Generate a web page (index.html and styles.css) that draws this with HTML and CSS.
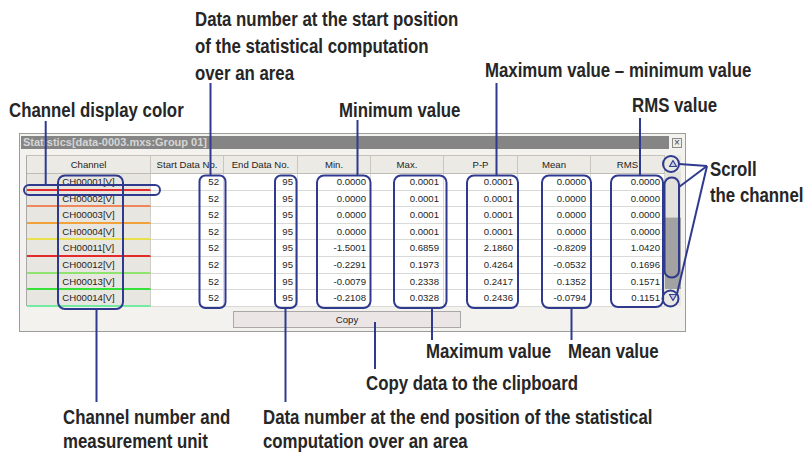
FILE: index.html
```html
<!DOCTYPE html>
<html>
<head>
<meta charset="utf-8">
<link rel="stylesheet" href="styles.css">
</head>
<body>
<div class="page">
  <div class="window">
    <div class="titlebar">
      <div class="title">Statistics[data-0003.mxs:Group 01]</div>
      <div class="close">×</div>
    </div>
    <div class="grid-wrap">
      <div class="table">
        <div class="hd">Channel</div><div class="hd">Start Data No.</div><div class="hd">End Data No.</div><div class="hd">Min.</div><div class="hd">Max.</div><div class="hd">P-P</div><div class="hd">Mean</div><div class="hd">RMS</div>

        <div class="ch c1">CH00001[V]</div><div class="td">52</div><div class="td">95</div><div class="td">0.0000</div><div class="td">0.0001</div><div class="td">0.0001</div><div class="td">0.0000</div><div class="td">0.0000</div>
        <div class="ch c2">CH00002[V]</div><div class="td">52</div><div class="td">95</div><div class="td">0.0000</div><div class="td">0.0001</div><div class="td">0.0001</div><div class="td">0.0000</div><div class="td">0.0000</div>
        <div class="ch c3">CH00003[V]</div><div class="td">52</div><div class="td">95</div><div class="td">0.0000</div><div class="td">0.0001</div><div class="td">0.0001</div><div class="td">0.0000</div><div class="td">0.0000</div>
        <div class="ch c4">CH00004[V]</div><div class="td">52</div><div class="td">95</div><div class="td">0.0000</div><div class="td">0.0001</div><div class="td">0.0001</div><div class="td">0.0000</div><div class="td">0.0000</div>
        <div class="ch c5">CH00011[V]</div><div class="td">52</div><div class="td">95</div><div class="td">-1.5001</div><div class="td">0.6859</div><div class="td">2.1860</div><div class="td">-0.8209</div><div class="td">1.0420</div>
        <div class="ch c6">CH00012[V]</div><div class="td">52</div><div class="td">95</div><div class="td">-0.2291</div><div class="td">0.1973</div><div class="td">0.4264</div><div class="td">-0.0532</div><div class="td">0.1696</div>
        <div class="ch c7">CH00013[V]</div><div class="td">52</div><div class="td">95</div><div class="td">-0.0079</div><div class="td">0.2338</div><div class="td">0.2417</div><div class="td">0.1352</div><div class="td">0.1571</div>
        <div class="ch c8">CH00014[V]</div><div class="td">52</div><div class="td">95</div><div class="td">-0.2108</div><div class="td">0.0328</div><div class="td">0.2436</div><div class="td">-0.0794</div><div class="td">0.1151</div>
      </div>
      <div class="scrollbar">
        <div class="sbtn">
          <svg width="10" height="9" viewBox="0 0 10 9"><path d="M5 1.5 L8.5 7.5 L1.5 7.5 Z" fill="#c6c9e8" stroke="#34408f" stroke-width="1.2" stroke-linejoin="round"/></svg>
        </div>
        <div class="track">
          <div class="thumb"></div>
        </div>
        <div class="sbtn">
          <svg width="10" height="9" viewBox="0 0 10 9"><path d="M1.5 1.5 L8.5 1.5 L5 7.5 Z" fill="#c6c9e8" stroke="#34408f" stroke-width="1.2" stroke-linejoin="round"/></svg>
        </div>
      </div>
    </div>
    <div class="copy-row">
      <div class="copy">Copy</div>
    </div>
  </div>

  <svg class="callouts" width="806" height="452" viewBox="0 0 806 452">
    <g fill="none" stroke="#2f3a8f" stroke-width="2">
      <line x1="45.7" y1="121" x2="45.7" y2="185"/>
      <rect x="24" y="185" width="136" height="10" rx="5"/>
      <rect x="58" y="175.5" width="65" height="133.5" rx="7"/>
      <line x1="96.5" y1="309" x2="96.5" y2="402"/>
      <line x1="210.5" y1="83" x2="210.5" y2="175.5"/>
      <rect x="199.5" y="175.5" width="26" height="132.5" rx="6"/>
      <rect x="275" y="175.5" width="21.5" height="132.5" rx="6"/>
      <line x1="285.5" y1="308" x2="285.5" y2="402"/>
      <line x1="357.5" y1="120" x2="357.5" y2="175.5"/>
      <rect x="317" y="175.5" width="53.5" height="132.5" rx="7"/>
      <rect x="394" y="175.5" width="52.5" height="132.5" rx="7"/>
      <line x1="432" y1="308" x2="432" y2="340"/>
      <line x1="496.5" y1="83" x2="496.5" y2="175.5"/>
      <rect x="467" y="175.5" width="51" height="132.5" rx="7"/>
      <rect x="542" y="175.5" width="49" height="132.5" rx="7"/>
      <line x1="571.5" y1="308" x2="571.5" y2="340"/>
      <line x1="640" y1="118" x2="640" y2="175.5"/>
      <rect x="611" y="175.5" width="52" height="131.5" rx="7"/>
      <line x1="375" y1="322" x2="375" y2="369"/>
      <circle cx="671" cy="164" r="8"/>
      <rect x="664.5" y="177.5" width="14.5" height="100" rx="7"/>
      <circle cx="670.5" cy="298.5" r="8"/>
      <line x1="707" y1="166" x2="679" y2="164"/>
      <line x1="707" y1="166" x2="679" y2="187"/>
      <line x1="707" y1="166" x2="677" y2="294"/>
    </g>
  </svg>

  <div class="label l-start">Data number at the start position<br>of the statistical computation<br>over an area</div>
  <div class="label l-color">Channel display color</div>
  <div class="label l-min">Minimum value</div>
  <div class="label l-pp">Maximum value – minimum value</div>
  <div class="label l-rms">RMS value</div>
  <div class="label l-scroll">Scroll<br>the channel</div>
  <div class="label l-max">Maximum value</div>
  <div class="label l-mean">Mean value</div>
  <div class="label l-copy">Copy data to the clipboard</div>
  <div class="label l-chan">Channel number and<br>measurement unit</div>
  <div class="label l-end">Data number at the end position of the statistical<br>computation over an area</div>
</div>
</body>
</html>
```

FILE: styles.css
```css
html, body {
  margin: 0;
  padding: 0;
  background: #ffffff;
}

.page {
  position: relative;
  width: 806px;
  height: 452px;
  overflow: hidden;
  font-family: "Liberation Sans", Arial, sans-serif;
}

.window {
  box-sizing: border-box;
  margin: 133px 0 0 19px;
  width: 667px;
  height: 199px;
  border: 1px solid #9c9c9c;
  background: #f3f2ee;
  padding: 2px 3px 0 1px;
  display: flex;
  flex-direction: column;
}

.titlebar {
  display: flex;
  align-items: center;
  height: 13px;
  gap: 3px;
}

.title {
  flex: 1;
  height: 13px;
  background: #858585;
  color: #d6d6d6;
  font-weight: bold;
  font-size: 11px;
  line-height: 13px;
  padding-left: 2px;
  white-space: nowrap;
  overflow: hidden;
}

.close {
  box-sizing: border-box;
  width: 10px;
  height: 10px;
  border: 1px solid #8a8a8a;
  background: #eeede8;
  color: #444;
  font-size: 10px;
  line-height: 7px;
  text-align: center;
}

.grid-wrap {
  display: flex;
  margin: 6px 0 0 5px;
  height: 151px;
}

.table {
  box-sizing: border-box;
  display: grid;
  grid-template-columns: 124px 73px 74px 73px 73px 74px 73px 74px;
  grid-template-rows: 18px repeat(8, 16.6px);
  border-left: 1px solid #a9a9a9;
  border-bottom: 1px solid #a9a9a9;
  border-top: 1px solid #c4c2bb;
  background: #ffffff;
  font-size: 9.6px;
  color: #1e1e1e;
}

.hd {
  box-sizing: border-box;
  background: #ebeae5;
  border-right: 1px solid #c8c6bf;
  border-bottom: 1px solid #bebcb5;
  text-align: center;
  line-height: 17px;
  white-space: nowrap;
}

.ch {
  box-sizing: border-box;
  background: #e7e6e1;
  border-right: 1px solid #cfcdc6;
  border-bottom: 2px solid #ccc;
  text-align: center;
  line-height: 15px;
  white-space: nowrap;
}

.c1 { border-bottom-color: #e42a2a; }
.c2 { border-bottom-color: #f0875a; }
.c3 { border-bottom-color: #f2a23a; }
.c4 { border-bottom-color: #e9e14c; }
.c5 { border-bottom-color: #e42a2a; }
.c6 { border-bottom-color: #8ee46e; }
.c7 { border-bottom-color: #36e23a; }
.c8 { border-bottom-color: #74eaa0; }

.td {
  box-sizing: border-box;
  background: #ffffff;
  border-right: 1px solid #d9d9d6;
  border-bottom: 1px solid #d9d9d6;
  text-align: right;
  padding-right: 4px;
  line-height: 15.6px;
  white-space: nowrap;
}

.scrollbar {
  width: 16px;
  display: flex;
  flex-direction: column;
  background: #a5a5a5;
}

.sbtn {
  height: 17px;
  background: #e9e8e3;
  display: flex;
  align-items: center;
  justify-content: center;
}

.track {
  flex: 1;
  background: #a2a2a2;
}

.thumb {
  height: 45px;
  background: #e2e1dc;
  border-bottom: 1px solid #c9c8c3;
}

.copy-row {
  display: flex;
  margin: 5px 0 0 212px;
}

.copy {
  box-sizing: border-box;
  width: 228px;
  height: 17px;
  border: 1px solid #aaa7a7;
  background: #ebe5e6;
  font-size: 9.6px;
  color: #222;
  text-align: center;
  line-height: 15px;
}

.callouts {
  position: absolute;
  left: 0;
  top: 0;
  pointer-events: none;
}

.label {
  position: absolute;
  font-family: "Liberation Sans", Arial, sans-serif;
  font-weight: bold;
  font-size: 20.5px;
  line-height: 24px;
  color: #262626;
  white-space: nowrap;
  transform: scaleX(0.82);
  transform-origin: 0 0;
}

.l-start { left: 195px; top: 5px; line-height: 27px; }
.l-color { left: 9px; top: 97.5px; }
.l-min { left: 339px; top: 98px; }
.l-pp { left: 485px; top: 57.5px; }
.l-rms { left: 632px; top: 92.5px; }
.l-scroll { left: 710px; top: 156px; line-height: 25.5px; }
.l-max { left: 426px; top: 339px; }
.l-mean { left: 568px; top: 339px; }
.l-copy { left: 366px; top: 371px; }
.l-chan { left: 63px; top: 405px; }
.l-end { left: 263px; top: 405px; }
```
